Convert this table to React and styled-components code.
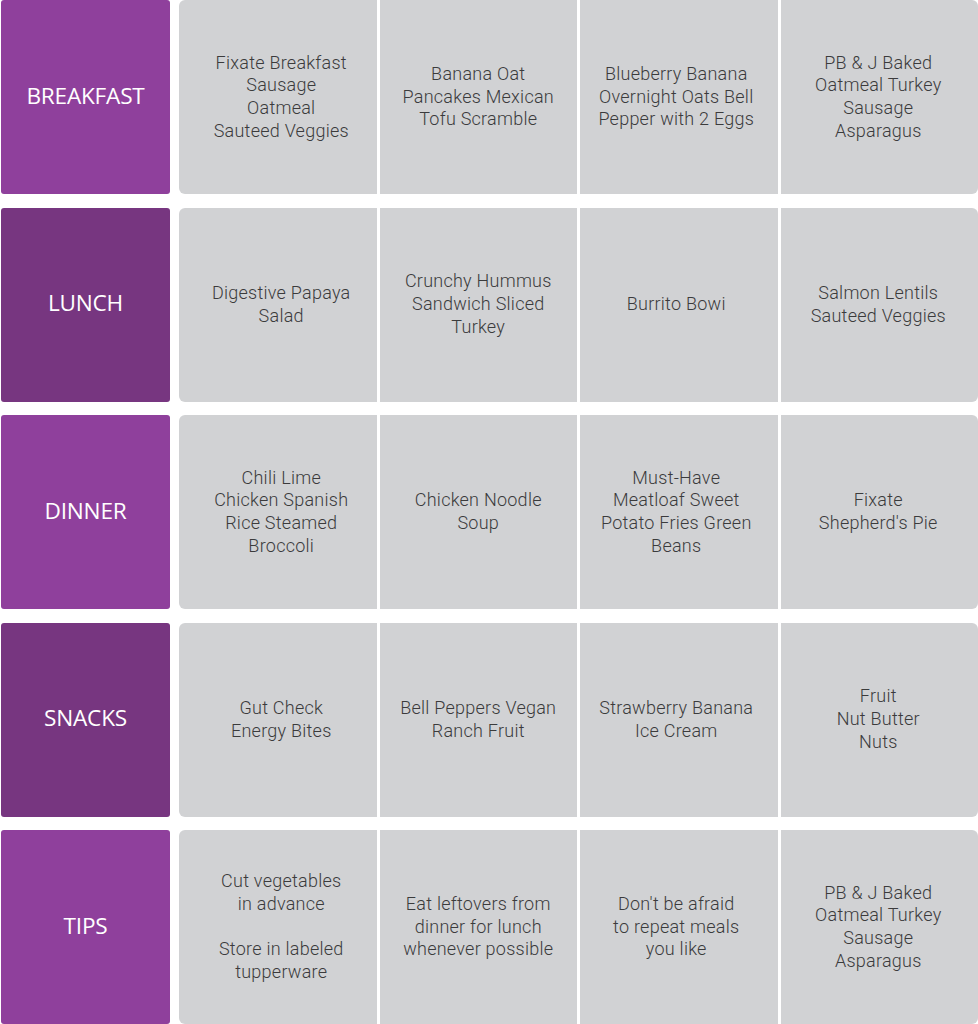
import React from 'react';
import styled, { createGlobalStyle } from 'styled-components';

const GlobalStyle = createGlobalStyle`
  html, body {
    margin: 0;
    padding: 0;
    background: #ffffff;
  }
`;

const Planner = styled.div`
  width: 978px;
  display: grid;
  grid-template-rows: repeat(5, 194px);
  row-gap: 13.5px;
  box-sizing: border-box;
  padding-left: 1px;
`;

const Row = styled.div`
  display: grid;
  grid-template-columns: 169px 1fr;
  column-gap: 9px;
`;

const Label = styled.div`
  display: flex;
  align-items: center;
  justify-content: center;
  background: ${props => (props.dark ? '#773680' : '#8f409c')};
  border-radius: 3px;
  color: #ffffff;
  font-family: 'Open Sans', 'Liberation Sans', sans-serif;
  font-size: 22.6px;
  letter-spacing: -0.2px;
  padding-bottom: 4px;
`;

const Cells = styled.div`
  display: grid;
  grid-template-columns: repeat(4, 1fr);
  column-gap: 3px;
`;

// the reference text sits a little off-centre in some columns
const shifts = [
  'padding-left: 7px;',
  '',
  'padding-right: 5px;',
  'padding-right: 2px;',
];

const Cell = styled.div`
  display: flex;
  flex-direction: column;
  align-items: center;
  justify-content: center;
  box-sizing: border-box;
  background: #d1d2d4;
  color: #3b3b3c;
  font-family: Roboto, 'Liberation Sans', sans-serif;
  font-weight: 300;
  font-size: 18px;
  letter-spacing: 0.25px;
  line-height: 22.7px;
  text-align: center;
  ${props => shifts[props.col]}
  &:first-child {
    border-radius: 6px 0 0 6px;
  }
  &:last-child {
    border-radius: 0 6px 6px 0;
  }
`;

const Line = styled.span`
  display: block;
  white-space: nowrap;
  min-height: 22.7px;
`;

const plan = [
  {
    label: 'BREAKFAST',
    cells: [
      ['Fixate Breakfast', 'Sausage', 'Oatmeal', 'Sauteed Veggies'],
      ['Banana Oat', 'Pancakes Mexican', 'Tofu Scramble'],
      ['Blueberry Banana', 'Overnight Oats Bell', 'Pepper with 2 Eggs'],
      ['PB & J Baked', 'Oatmeal Turkey', 'Sausage', 'Asparagus'],
    ],
  },
  {
    label: 'LUNCH',
    dark: true,
    cells: [
      ['Digestive Papaya', 'Salad'],
      ['Crunchy Hummus', 'Sandwich Sliced', 'Turkey'],
      ['Burrito Bowi'],
      ['Salmon Lentils', 'Sauteed Veggies'],
    ],
  },
  {
    label: 'DINNER',
    cells: [
      ['Chili Lime', 'Chicken Spanish', 'Rice Steamed', 'Broccoli'],
      ['Chicken Noodle', 'Soup'],
      ['Must-Have', 'Meatloaf Sweet', 'Potato Fries Green', 'Beans'],
      ['Fixate', "Shepherd's Pie"],
    ],
  },
  {
    label: 'SNACKS',
    dark: true,
    cells: [
      ['Gut Check', 'Energy Bites'],
      ['Bell Peppers Vegan', 'Ranch Fruit'],
      ['Strawberry Banana', 'Ice Cream'],
      ['Fruit', 'Nut Butter', 'Nuts'],
    ],
  },
  {
    label: 'TIPS',
    cells: [
      ['Cut vegetables', 'in advance', '', 'Store in labeled', 'tupperware'],
      ['Eat leftovers from', 'dinner for lunch', 'whenever possible'],
      ["Don't be afraid", 'to repeat meals', 'you like'],
      ['PB & J Baked', 'Oatmeal Turkey', 'Sausage', 'Asparagus'],
    ],
  },
];

export default function App() {
  return (
    <>
      <GlobalStyle />
      <Planner>
        {plan.map(row => (
          <Row key={row.label}>
            <Label dark={row.dark}>{row.label}</Label>
            <Cells>
              {row.cells.map((lines, i) => (
                <Cell key={i} col={i}>
                  {lines.map((line, j) => (
                    <Line key={j}>{line}</Line>
                  ))}
                </Cell>
              ))}
            </Cells>
          </Row>
        ))}
      </Planner>
    </>
  );
}
